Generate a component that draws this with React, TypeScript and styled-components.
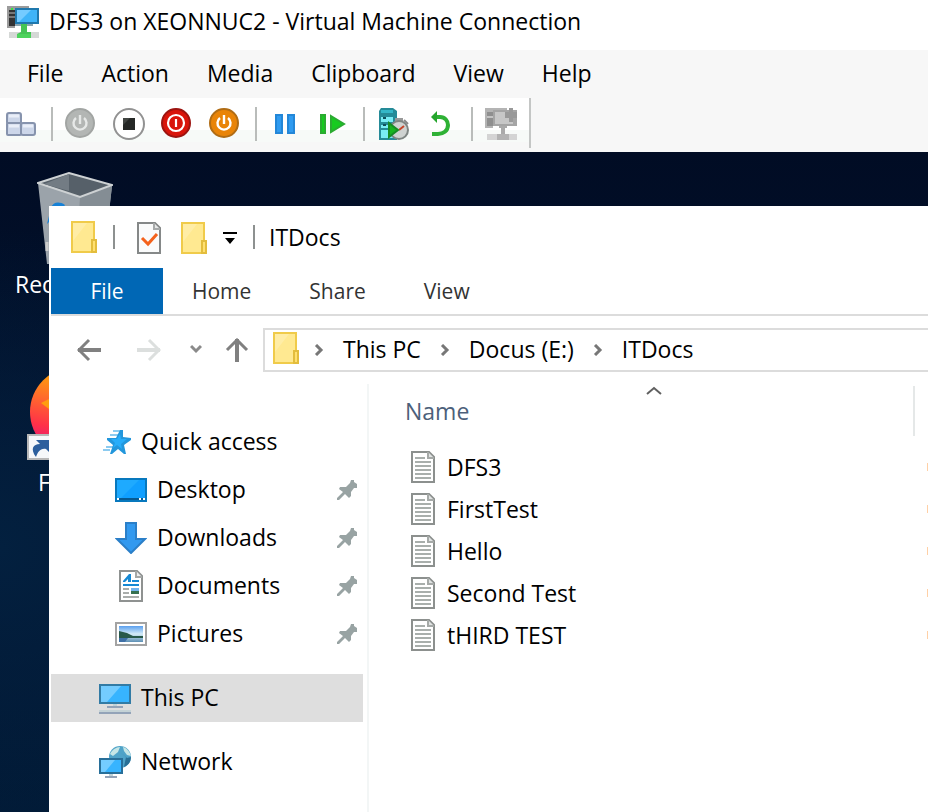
import React from "react";
import styled, { createGlobalStyle } from "styled-components";

const GlobalStyle = createGlobalStyle`
  * { box-sizing: border-box; }
  html, body, #root { height: 100%; }
  body {
    margin: 0;
    background: #fff;
    color: #000;
    font-family: "Open Sans", "Noto Sans", sans-serif;
    font-size: 23px;
    line-height: 32px;
    white-space: nowrap;
    overflow: hidden;
  }
  button {
    font: inherit;
    color: inherit;
    border: 0;
    margin: 0;
    padding: 0;
    background: none;
    white-space: nowrap;
  }
  svg { display: block; flex: none; }
`;

/* ---------- Virtual machine window ---------- */

const VmWindow = styled.div`
  height: 100vh;
  display: flex;
  flex-direction: column;
`;

const VmTitleBar = styled.header`
  height: 50px;
  flex: none;
  display: flex;
  align-items: center;
  gap: 10px;
  padding: 0 7px 6px;
`;

const VmTitle = styled.h1`
  margin: 0;
  padding-bottom: 2px;
  font-size: 23px;
  font-weight: 400;
`;

const MenuBar = styled.nav`
  height: 48px;
  flex: none;
  display: flex;
  align-items: center;
  padding: 0 8px;
  background: #f7f7f7;
`;

const MenuItem = styled.button`
  height: 48px;
  padding: 0 19px 2px;
`;

const ToolBarBand = styled.div`
  height: 54px;
  flex: none;
  display: flex;
  background: #f7f7f7;
`;

const ToolBar = styled.div`
  height: 50px;
  display: flex;
  align-items: center;
  padding: 2px 12px 0 5px;
  border-right: 2px solid #c4c6c5;
  background: linear-gradient(#fff 0 32px, #f7faf8 32px 44px, #f7f7f7 44px);
`;

const ToolGroup = styled.div`
  display: flex;
  gap: 16px;
`;

const ToolButton = styled.button`
  width: 32px;
  height: 32px;
  display: flex;
  align-items: center;
  justify-content: center;
`;

const ToolSeparator = styled.span`
  width: 2px;
  height: 34px;
  margin: 0 12px 0 14px;
  background: #b9bcba;
`;

/* ---------- Guest desktop ---------- */

const Desktop = styled.main`
  flex: 1;
  min-height: 0;
  position: relative;
  overflow: hidden;
  color: #fff;
  background:
    radial-gradient(circle at 0 60%, #03203f 0, transparent 320px),
    linear-gradient(#010c24, #021430 50%, #011a36);
`;

const DesktopIcon = styled.button<{ $top: number }>`
  position: absolute;
  left: 0;
  top: ${(p) => p.$top}px;
  width: 150px;
  display: flex;
  flex-direction: column;
  align-items: center;
  gap: 4px;
`;

const DesktopLabel = styled.span<{ $indent: number }>`
  align-self: flex-start;
  padding-left: ${(p) => p.$indent}px;
`;

/* ---------- Explorer window ---------- */

const Explorer = styled.section`
  position: absolute;
  inset: 54px 0 0 49px;
  padding-left: 2px;
  display: flex;
  flex-direction: column;
  color: #000;
  background: #fff;
`;

const ExplorerTitle = styled.header`
  height: 62px;
  flex: none;
  display: flex;
  align-items: center;
  padding-left: 20px;
`;

const TitleSeparator = styled.span<{ $after: number }>`
  width: 2px;
  height: 24px;
  margin: 0 ${(p) => p.$after}px 0 16px;
  background: #8d9190;
`;

const QuickTools = styled.div`
  display: grid;
  grid-template-columns: 44px 42px 14px;
  align-items: center;
  padding-top: 2px;
`;

const IconButton = styled.button`
  display: flex;
  align-items: center;
`;

const WindowName = styled.h2`
  margin: 0;
  font-size: 23px;
  font-weight: 400;
`;

const Ribbon = styled.nav`
  height: 48px;
  flex: none;
  display: flex;
  border-bottom: 2px solid #dcdcdc;
`;

const RibbonTab = styled.button<{ $primary?: boolean }>`
  height: 46px;
  min-width: ${(p) => (p.$primary ? 112 : 0)}px;
  padding: 0 29px;
  font-size: 21px;
  color: ${(p) => (p.$primary ? "#fff" : "#333")};
  background: ${(p) => (p.$primary ? "#0067b5" : "transparent")};
`;

const NavRow = styled.div`
  height: 68px;
  flex: none;
  display: flex;
  align-items: center;
`;

const NavButtons = styled.div`
  width: 212px;
  flex: none;
  display: grid;
  grid-template-columns: 60px 53px 35px auto;
  align-items: center;
  padding-left: 26px;
`;

const AddressBar = styled.div`
  flex: 1;
  height: 44px;
  display: flex;
  align-items: center;
  gap: 19px;
  padding-left: 8px;
  border: 2px solid #dcdcdc;
  border-right: 0;
`;

const AddressIcon = styled.span`
  height: 40px;
  padding-top: 2px;
  margin-right: -4px;
`;

const Crumb = styled.button`
  padding-bottom: 2px;
`;

const Body = styled.div`
  flex: 1;
  min-height: 0;
  display: flex;
`;

const Sidebar = styled.nav`
  width: 318px;
  flex: none;
  display: flex;
  flex-direction: column;
  gap: 16px;
  padding: 34px 4px 0 0;
  border-right: 2px solid #f3f6f6;
`;

const TreeGroup = styled.div`
  display: flex;
  flex-direction: column;
`;

const TreeItem = styled.button<{ $child?: boolean; $selected?: boolean }>`
  height: 48px;
  display: flex;
  align-items: center;
  gap: 10px;
  padding: 0 6px 0 ${(p) => (p.$child ? 64 : 48)}px;
  text-align: left;
  background: ${(p) => (p.$selected ? "#dedede" : "transparent")};
`;

const TreeLabel = styled.span`
  flex: 1;
  padding-bottom: 2px;
`;

const Files = styled.table`
  flex: 1;
  align-self: flex-start;
  width: 100%;
  table-layout: fixed;
  border-collapse: collapse;
`;

const NameHead = styled.th`
  height: 62px;
  padding: 0 0 8px 36px;
  text-align: left;
  font-weight: 400;
  color: #4c607a;
`;

const HeadCell = styled.div`
  border-right: 2px solid #e5e8e8;
  height: 50px;
`;

const SortMark = styled.span`
  display: flex;
  justify-content: center;
  height: 9px;
  padding-right: 10px;
`;

const HeadButton = styled.button`
  display: block;
  height: 32px;
`;

const FileCell = styled.td`
  height: 42px;
  padding: 0 0 0 42px;
`;

const FileLink = styled.a`
  display: flex;
  align-items: center;
  gap: 12px;
  color: #000;
  text-decoration: none;
`;

const EdgeCell = styled.td`
  width: 13px;
  padding: 0;
`;

const EdgeHead = styled.th`
  width: 13px;
  padding: 0;
`;

const EdgeMark = styled.span`
  display: block;
  width: 1px;
  height: 8px;
  margin-left: auto;
  background: #ffd0a6;
`;

/* ---------- Icons ---------- */

const VmIcon = () => (
  <svg width="32" height="32" viewBox="0 0 16 16" aria-hidden="true">
    <path d="M0 0h11v1H4v10H0z" fill="#9b9b9b" />
    <path d="M1 2h3v8H1z" fill="#333" />
    <path d="M1 3h3v1H1zM1 5h3v1H1z" fill="#777" />
    <path d="M2 1h1v1H2z" fill="#39e639" />
    <path d="M4 1h12v8H4z" fill="#1f78ad" />
    <path d="M5 2h10v6H5z" fill="#3fb4f8" />
    <path d="M5 2h7L6 8H5z" fill="#74cbff" />
    <path d="M4 9h9v1H4z" fill="#8ba5b0" />
    <path d="M1 13h15v3H1z" fill="#d5d8d6" />
    <path d="M7 9h3v4h2v3H5v-2l2-1z" fill="#45c455" />
    <path d="M5 14h7v2H5z" fill="#4dd35c" />
  </svg>
);

const KeysIcon = () => (
  <svg width="30" height="24" viewBox="0 0 30 24" aria-hidden="true">
    <g fill="#ccd6e9" stroke="#8693ad" strokeWidth="2">
      <rect x="1" y="1" width="14" height="11" rx="2" />
      <rect x="1" y="11" width="14" height="12" rx="1" />
      <rect x="15" y="11" width="14" height="12" rx="2" />
    </g>
    <path d="M3 4h10M3 14h10M17 14h10" stroke="#e9eef8" strokeWidth="3" />
  </svg>
);

const PowerIcon = ({ rim, fill, glyph }: { rim: string; fill: string; glyph: string }) => (
  <svg width="32" height="32" viewBox="0 0 32 32" aria-hidden="true">
    <circle cx="15" cy="15" r="14" fill={fill} stroke={rim} strokeWidth="2" />
    <g fill="none" stroke={glyph} strokeWidth="2.4">
      <path d="M11 10a6.500 6.500 0 1 0 8 0" />
      <path d="M15 7v9" />
    </g>
  </svg>
);

const StopIcon = () => (
  <svg width="32" height="32" viewBox="0 0 32 32" aria-hidden="true">
    <circle cx="16" cy="16" r="15" fill="#fff" stroke="#929292" strokeWidth="2" />
    <path d="M10 10h12v12H10z" fill="#252826" />
    <path d="M10 10h7l-7 7z" fill="#414542" />
  </svg>
);

const ShutDownIcon = () => (
  <svg width="32" height="32" viewBox="0 0 32 32" aria-hidden="true">
    <circle cx="15" cy="15" r="14" fill="#d9150b" stroke="#9c1410" strokeWidth="2" />
    <circle cx="15" cy="15" r="8" fill="none" stroke="#fff" strokeWidth="2.2" />
    <path d="M15 11v8" stroke="#fff" strokeWidth="2.2" />
  </svg>
);

const PauseIcon = () => (
  <svg width="20" height="20" viewBox="0 0 20 20" aria-hidden="true">
    <path d="M1 1h6v18H1zM13 1h6v18h-6z" fill="#2f9bf0" stroke="#2387d8" strokeWidth="2" />
  </svg>
);

const ResumeIcon = () => (
  <svg width="26" height="20" viewBox="0 0 26 20" aria-hidden="true">
    <path d="M1 1h4v18H1zM11 2l13 8-13 8z" fill="#17cb20" stroke="#2bab31" strokeWidth="2" />
  </svg>
);

const CheckpointIcon = () => (
  <svg width="32" height="32" viewBox="0 0 32 32" aria-hidden="true">
    <path d="M4 0h12l4 3v29H2V3z" fill="#258b98" />
    <path d="M4 2h12v3H4z" fill="#35b7c8" />
    <path d="M4 9h12v5H4zM4 17h12v3H4zM4 22h12v8H4z" fill="#79ecf5" />
    <path d="M6 9h3v2H6zM6 16h3v2H6z" fill="#0f4f5b" />
    <path d="M18 10h8v3h-8z" fill="#999" />
    <circle cx="22" cy="22" r="9" fill="#cfd3d1" stroke="#7e8582" strokeWidth="2" />
    <path d="M27 12l4 4" stroke="#888" strokeWidth="2" />
    <path d="M22 22l5-4" stroke="#c6452a" strokeWidth="2" />
    <path d="M12 15l9 7-9 7z" fill="#17b51f" stroke="#168c25" strokeWidth="2" />
  </svg>
);

const RevertIcon = () => (
  <svg width="20" height="26" viewBox="0 0 20 26" aria-hidden="true">
    <path d="M5 6h4c5 0 8 4 8 8 0 6-5 9-10 9H1" fill="none" stroke="#2eb135" strokeWidth="4" />
    <path d="M0 6l6-6v12z" fill="#25a52d" />
  </svg>
);

const EnhancedIcon = () => (
  <svg width="32" height="32" viewBox="0 0 16 16" aria-hidden="true">
    <path d="M0 0h11v1H4v9H0z" fill="#b4b4b4" />
    <path d="M1 2h3v7H1z" fill="#8f8f8f" />
    <path d="M1 4h3v1H1z" fill="#c4c4c4" />
    <path d="M4 1h12v8H4z" fill="#a5a5a5" />
    <path d="M5 2h9v6H5z" fill="#c7c7c7" />
    <path d="M12 0h2v2h2v3h-2v2h-2V5h-2V2h2z" fill="#999" />
    <path d="M7 9h4v1H7zM8 10h2v3H8z" fill="#aaa" />
    <path d="M1 13h15v3H1z" fill="#d4d4d4" />
    <path d="M6 13h6v3H6z" fill="#b3b3b3" />
  </svg>
);

const BinIcon = () => (
  <svg width="76" height="92" viewBox="0 0 76 92" aria-hidden="true">
    <path d="M1 11l42 14 32-11-9 78H10z" fill="#9ba3aa" />
    <path d="M43 25l32-11-9 78H39z" fill="#848d94" />
    <path d="M1 11L32 1l43 12-32 12z" fill="#566069" stroke="#cdd1d3" strokeWidth="2" />
    <path d="M32 2v17L7 12z" fill="#737c84" />
    <path d="M14 36c2-6 8-7 14-3l-4 6 8 9H14l-4 4z" fill="#1681d6" />
    <path d="M10 70v9" stroke="#ccc" strokeWidth="3" />
  </svg>
);

const FirefoxIcon = () => (
  <svg width="96" height="96" viewBox="0 0 96 96" aria-hidden="true">
    <defs>
      <linearGradient id="flame" x1="0.3" y1="0" x2="0.1" y2="1">
        <stop offset="0" stopColor="#ffb000" />
        <stop offset="0.35" stopColor="#ff6b2c" />
        <stop offset="0.65" stopColor="#ff3148" />
        <stop offset="1" stopColor="#d60a91" />
      </linearGradient>
    </defs>
    <circle cx="48" cy="46" r="45" fill="url(#flame)" />
    <path d="M14 37l8-4v10z" fill="#ff9d10" />
    <path d="M1 69h24v24H1z" fill="#f6f8fa" stroke="#b7b7b7" strokeWidth="2" />
    <path d="M9 91c-6-8-3-13 4-13l-4-4h15v14l-5-5c-6-1-8 3-10 8z" fill="#2d5f9d" />
  </svg>
);

const FolderIcon = () => (
  <svg width="26" height="32" viewBox="0 0 26 32" aria-hidden="true">
    <path d="M1 1h22v30H1z" fill="#ffe991" stroke="#f0cb4a" strokeWidth="2" />
    <path d="M2 2h14L2 20z" fill="#ffeda6" />
    <path d="M21 19h4v12h-4z" fill="#ffe070" stroke="#e3bd3d" strokeWidth="2" />
  </svg>
);

const TaskIcon = () => (
  <svg width="24" height="32" viewBox="0 0 24 32" aria-hidden="true">
    <path d="M1 1h17l5 5v25H1z" fill="#fafbfb" stroke="#858888" strokeWidth="2" />
    <path d="M17 1v6h6" fill="#e6e8e8" stroke="#a7aaaa" strokeWidth="2" />
    <path d="M5 16l6 6 9-10" fill="none" stroke="#f4621c" strokeWidth="3" />
  </svg>
);

const CustomizeIcon = () => (
  <svg width="14" height="12" viewBox="0 0 14 12" aria-hidden="true">
    <path d="M0 0h14v2H0zM2 6h10l-5 6z" fill="#000" />
  </svg>
);

const ArrowIcon = ({ turn, color }: { turn: number; color: string }) => (
  <svg width="24" height="24" viewBox="0 0 24 24" aria-hidden="true">
    <g transform={`rotate(${turn} 12 12)`} fill="none" stroke={color}>
      <path d="M1 12h23" strokeWidth="4" />
      <path d="M12 2L2 12l10 10" strokeWidth="3" />
    </g>
  </svg>
);

const DownIcon = () => (
  <svg width="12" height="12" viewBox="0 0 12 12" aria-hidden="true">
    <path d="M1 2l5 5 5-5" fill="none" stroke="#8a8a8a" strokeWidth="3" />
  </svg>
);

const ChevronIcon = () => (
  <svg width="10" height="12" viewBox="0 0 10 12" aria-hidden="true">
    <path d="M2 1l5 5-5 5" fill="none" stroke="#777" strokeWidth="3" />
  </svg>
);

const SortIcon = () => (
  <svg width="16" height="9" viewBox="0 0 16 9" aria-hidden="true">
    <path d="M1 8l7-6 7 6" fill="none" stroke="#606060" strokeWidth="2" />
  </svg>
);

const StarIcon = () => (
  <svg width="32" height="24" viewBox="0 0 32 24" aria-hidden="true">
    <path d="M14 1h8M11 5h9M7 17h8M4 20h7M8 9h4" stroke="#8ccbf0" strokeWidth="2" />
    <path d="M21 0h3v7l8 1v2l-7 5 2 9h-2l-6-5-6 5h-2l3-9-6-5V8h9z" fill="#2397dc" />
    <path d="M21 4l1 5h6l-6 5 1 5-5-4-4 3 2-5-4-4h6z" fill="#27adfa" />
  </svg>
);

const DesktopItemIcon = () => (
  <svg width="32" height="24" viewBox="0 0 16 12" aria-hidden="true">
    <path d="M0 0h16v12H0z" fill="#0878bd" />
    <path d="M1 1h14v9H1z" fill="#109fff" />
    <path d="M1 1h11L3 10H1z" fill="#1eaaff" />
    <path d="M1 10h14v1H1z" fill="#075a92" />
    <path d="M1 10h1v1H1zM12 10h1v1h-1zM14 10h1v1h-1z" fill="#fff" />
  </svg>
);

const DownloadIcon = () => (
  <svg width="32" height="32" viewBox="0 0 32 32" aria-hidden="true">
    <path d="M11 1h10v16h9L16 31 2 17h9z" fill="#3299ef" stroke="#2b7fc8" strokeWidth="2" />
  </svg>
);

const DocumentsIcon = () => (
  <svg width="32" height="32" viewBox="0 0 32 32" aria-hidden="true">
    <path d="M5 1h17l5 5v25H5z" fill="#fff" stroke="#8f9291" strokeWidth="2" />
    <path d="M21 1v6h6" fill="#eee" stroke="#a5a8a7" strokeWidth="2" />
    <path d="M8 11l6-7h2v8h-3V9l-3 3H8zM17 10h7v2h-7zM8 14h16v2H8z" fill="#1689d4" />
    <path d="M8 18h6v2H8zM8 22h6v2H8zM8 26h16v2H8z" fill="#a9adab" />
    <path d="M16 18h8v3h-8z" fill="#72b4ed" />
    <path d="M16 21h8v3h-8z" fill="#35704f" />
  </svg>
);

const PicturesIcon = () => (
  <svg width="32" height="24" viewBox="0 0 32 24" aria-hidden="true">
    <defs>
      <linearGradient id="sky" x1="0" y1="0" x2="0" y2="1">
        <stop offset="0" stopColor="#5a9fee" />
        <stop offset="0.5" stopColor="#d5ecf8" />
        <stop offset="1" stopColor="#5d8fb4" />
      </linearGradient>
    </defs>
    <path d="M1 1h30v22H1z" fill="#fff" stroke="#a3a3a3" strokeWidth="2" />
    <path d="M4 4h24v16H4z" fill="url(#sky)" />
    <path d="M4 9l8 2 6 3h10v2H4z" fill="#28594a" />
    <path d="M4 16h9l-3 4H4z" fill="#3f70a6" />
  </svg>
);

const ComputerIcon = () => (
  <svg width="32" height="32" viewBox="0 0 16 16" aria-hidden="true">
    <path d="M0 1h16v10H0z" fill="#327ba5" />
    <path d="M1 2h14v8H1z" fill="#37b4ff" />
    <path d="M1 2h10L4 10H1z" fill="#74ccff" />
    <path d="M7 11h2v1H7z" fill="#bfd2d8" />
    <path d="M4 12h8v1H4zM0 15h16v1H0z" fill="#93a3b8" />
    <path d="M0 14h16v1H0z" fill="#c4d2d6" />
  </svg>
);

const NetworkIcon = () => (
  <svg width="32" height="32" viewBox="0 0 32 32" aria-hidden="true">
    <circle cx="21" cy="11" r="11" fill="#4fa3c8" />
    <path d="M11 8c2-4 6-7 10-7l-2 5-5 4zM24 1c4 1 7 5 8 9l-4-1-3-4z" fill="#c6e6e6" />
    <path d="M22 7l5 4-2 10c5-2 7-6 7-10l-4 1z" fill="#286f96" />
    <path d="M0 12h24v16H0z" fill="#286f99" />
    <path d="M2 14h20v12H2z" fill="#37b4ff" />
    <path d="M2 14h14L6 26H2z" fill="#74ccff" />
    <path d="M10 28h4v2h-4z" fill="#bfd2d8" />
    <path d="M6 30h12v2H6z" fill="#93a3b8" />
  </svg>
);

const PinIcon = () => (
  <svg width="20" height="20" viewBox="0 0 20 20" aria-hidden="true">
    <path d="M14 0h3v2l3 2v4h-3l-3 4v4l-2 2-4-4-6 6H0v-2l6-6-4-3 1-2h6l4-4z" fill="#98a3a3" />
  </svg>
);

const TextFileIcon = () => (
  <svg width="24" height="32" viewBox="0 0 24 32" aria-hidden="true">
    <path d="M1 1h17l5 5v25H1z" fill="#fff" stroke="#8c908e" strokeWidth="2" />
    <path d="M17 1v6h6" fill="#e1e4e3" stroke="#a6aaa8" strokeWidth="2" />
    <path d="M4 7h10M4 11h16M4 15h16M4 19h16M4 23h16M4 27h16" stroke="#a9afac" strokeWidth="2" />
  </svg>
);

/* ---------- Page ---------- */

const menus = ["File", "Action", "Media", "Clipboard", "View", "Help"];
const tabs = ["File", "Home", "Share", "View"];
const path = ["This PC", "Docus (E:)", "ITDocs"];
const files = ["DFS3", "FirstTest", "Hello", "Second Test", "tHIRD TEST"];
const pinned = [
  { label: "Desktop", icon: <DesktopItemIcon /> },
  { label: "Downloads", icon: <DownloadIcon /> },
  { label: "Documents", icon: <DocumentsIcon /> },
  { label: "Pictures", icon: <PicturesIcon /> },
];
const toolGroups = [
  [{ label: "Ctrl+Alt+Delete", icon: <KeysIcon /> }],
  [
    { label: "Start", icon: <PowerIcon rim="#a2a5a3" fill="#b3b6b4" glyph="#e6e8e7" /> },
    { label: "Turn Off", icon: <StopIcon /> },
    { label: "Shut Down", icon: <ShutDownIcon /> },
    { label: "Save", icon: <PowerIcon rim="#b06c14" fill="#e98407" glyph="#fff" /> },
  ],
  [
    { label: "Pause", icon: <PauseIcon /> },
    { label: "Reset", icon: <ResumeIcon /> },
  ],
  [
    { label: "Checkpoint", icon: <CheckpointIcon /> },
    { label: "Revert", icon: <RevertIcon /> },
  ],
  [{ label: "Enhanced Session", icon: <EnhancedIcon /> }],
];

export default function App() {
  return (
    <VmWindow>
      <GlobalStyle />
      <VmTitleBar>
        <VmIcon />
        <VmTitle>DFS3 on XEONNUC2 - Virtual Machine Connection</VmTitle>
      </VmTitleBar>
      <MenuBar>
        {menus.map((m) => (
          <MenuItem key={m}>{m}</MenuItem>
        ))}
      </MenuBar>
      <ToolBarBand>
        <ToolBar>
          {toolGroups.map((group, i) => (
            <React.Fragment key={i}>
              {i > 0 && <ToolSeparator />}
              <ToolGroup>
                {group.map((t) => (
                  <ToolButton key={t.label} aria-label={t.label}>
                    {t.icon}
                  </ToolButton>
                ))}
              </ToolGroup>
            </React.Fragment>
          ))}
        </ToolBar>
      </ToolBarBand>

      <Desktop>
        <DesktopIcon $top={20}>
          <BinIcon />
          <DesktopLabel $indent={15}>Rec</DesktopLabel>
        </DesktopIcon>
        <DesktopIcon $top={214}>
          <FirefoxIcon />
          <DesktopLabel $indent={38}>F</DesktopLabel>
        </DesktopIcon>

        <Explorer>
          <ExplorerTitle>
            <FolderIcon />
            <TitleSeparator $after={22} />
            <QuickTools>
              <IconButton aria-label="Properties"><TaskIcon /></IconButton>
              <IconButton aria-label="New folder"><FolderIcon /></IconButton>
              <IconButton aria-label="Customize toolbar"><CustomizeIcon /></IconButton>
            </QuickTools>
            <TitleSeparator $after={14} />
            <WindowName>ITDocs</WindowName>
          </ExplorerTitle>
          <Ribbon>
            {tabs.map((t, i) => (
              <RibbonTab key={t} $primary={i === 0}>{t}</RibbonTab>
            ))}
          </Ribbon>
          <NavRow>
            <NavButtons>
              <IconButton aria-label="Back"><ArrowIcon turn={0} color="#808080" /></IconButton>
              <IconButton aria-label="Forward"><ArrowIcon turn={180} color="#dcdfde" /></IconButton>
              <IconButton aria-label="Recent locations"><DownIcon /></IconButton>
              <IconButton aria-label="Up"><ArrowIcon turn={90} color="#808080" /></IconButton>
            </NavButtons>
            <AddressBar>
              <AddressIcon><FolderIcon /></AddressIcon>
              {path.map((p) => (
                <React.Fragment key={p}>
                  <ChevronIcon />
                  <Crumb>{p}</Crumb>
                </React.Fragment>
              ))}
            </AddressBar>
          </NavRow>
          <Body>
            <Sidebar>
              <TreeGroup>
                <TreeItem>
                  <StarIcon />
                  <TreeLabel>Quick access</TreeLabel>
                </TreeItem>
                {pinned.map((p) => (
                  <TreeItem key={p.label} $child>
                    {p.icon}
                    <TreeLabel>{p.label}</TreeLabel>
                    <PinIcon />
                  </TreeItem>
                ))}
              </TreeGroup>
              <TreeItem $selected>
                <ComputerIcon />
                <TreeLabel>This PC</TreeLabel>
              </TreeItem>
              <TreeItem>
                <NetworkIcon />
                <TreeLabel>Network</TreeLabel>
              </TreeItem>
            </Sidebar>
            <Files>
              <thead>
                <tr>
                  <NameHead>
                    <HeadCell>
                      <SortMark><SortIcon /></SortMark>
                      <HeadButton>Name</HeadButton>
                    </HeadCell>
                  </NameHead>
                  <EdgeHead />
                </tr>
              </thead>
              <tbody>
                {files.map((f) => (
                  <tr key={f}>
                    <FileCell>
                      <FileLink href="#">
                        <TextFileIcon />
                        <span>{f}</span>
                      </FileLink>
                    </FileCell>
                    <EdgeCell><EdgeMark /></EdgeCell>
                  </tr>
                ))}
              </tbody>
            </Files>
          </Body>
        </Explorer>
      </Desktop>
    </VmWindow>
  );
}
